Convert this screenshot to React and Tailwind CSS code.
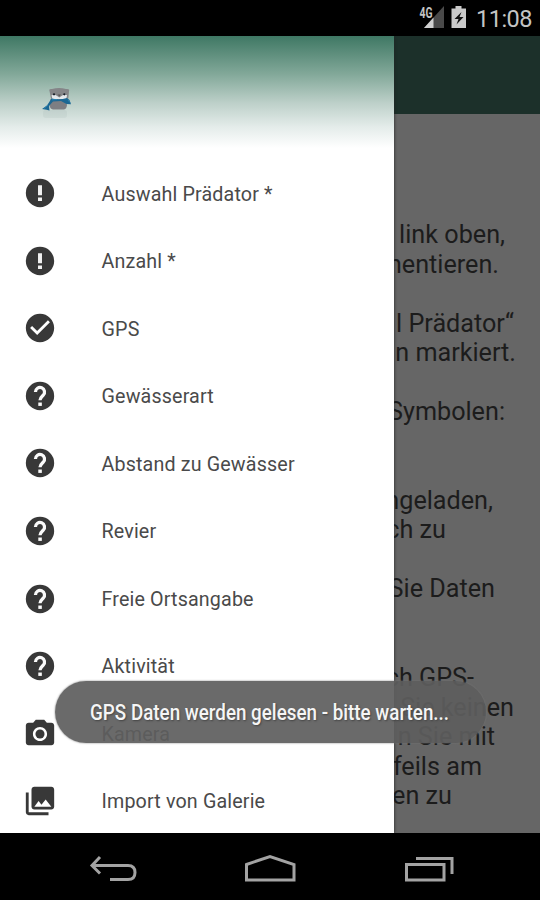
import { MdCheckCircle, MdPhotoCamera, MdPhotoLibrary } from 'react-icons/md';

const AlertIcon = ({ className }) => (
  <svg viewBox="0 0 24 24" className={className}>
    <circle cx="12" cy="12" r="10" fill="currentColor" />
    <path d="M10.600 6.500h2.800v7h-2.800zM10.600 15.100h2.800v2.600h-2.800z" fill="#f2f2f2" />
  </svg>
);

const HelpIcon = ({ className }) => (
  <svg viewBox="0 0 24 24" className={className}>
    <circle cx="12" cy="12" r="10" fill="currentColor" />
    <path d="M8.800 9.200a3.200 3.200 0 1 1 5.500 2.200C13.200 12.500 12 13.200 12 15" fill="none" stroke="#fafafa" strokeWidth="2.300" />
    <path d="M10.800 16.600h2.500V19h-2.500z" fill="#fafafa" />
  </svg>
);

const menuItems = [
  { label: 'Auswahl Prädator *', icon: AlertIcon },
  { label: 'Anzahl *', icon: AlertIcon },
  { label: 'GPS', icon: MdCheckCircle },
  { label: 'Gewässerart', icon: HelpIcon },
  { label: 'Abstand zu Gewässer', icon: HelpIcon },
  { label: 'Revier', icon: HelpIcon },
  { label: 'Freie Ortsangabe', icon: HelpIcon },
  { label: 'Aktivität', icon: HelpIcon },
  { label: 'Kamera', icon: MdPhotoCamera },
  { label: 'Import von Galerie', icon: MdPhotoLibrary },
];

// Only the line ends are visible beside the open drawer
const lines = [
  { text: 'link oben,', end: 'pr-[35px]' },
  { text: 'mentieren.', end: 'pr-[41px]' },
  { text: '' },
  { text: 'l Prädator“', end: 'pr-[26px]' },
  { text: 'n markiert.', end: 'pr-[24px]' },
  { text: '' },
  { text: 'Symbolen:', end: 'pr-[35px]' },
  { text: '' },
  { text: '' },
  { text: 'ngeladen,', end: 'pr-[47px]' },
  { text: 'ch zu', end: 'pr-[94px]' },
  { text: '' },
  { text: 'Sie Daten', end: 'pr-[45px]' },
  { text: '' },
  { text: '' },
  { text: 'ch GPS-', end: 'pr-[66px]' },
  { text: 'Sie keinen', end: 'pr-[26px]' },
  { text: 'n Sie mit', end: 'pr-[45px]' },
  { text: 'feils am', end: 'pr-[58px]' },
  { text: 'en zu', end: 'pr-[88px]' },
];

const StatusBar = () => (
  <div className="h-9 shrink-0 bg-black flex items-center justify-end pr-2 text-[#c4c4c4]">
    <svg width="26" height="24" viewBox="0 0 26 24" className="mr-[6px]">
      <path d="M25 0v22H5z" fill="#4a4a4a" />
      <path d="M14.500 11.500V22H5z" fill="#d0d0d0" />
      <text x="0.500" y="11.500" fontSize="14" fontWeight="700" fill="#c4c4c4" stroke="#000" strokeWidth="2" paintOrder="stroke" textLength="13" lengthAdjust="spacingAndGlyphs">4G</text>
    </svg>
    <svg width="16" height="24" viewBox="0 0 16 24" className="mr-[9px]">
      <path d="M4.500 0h6v2.500H15V22H.5V2.500h4z" fill="#cacaca" />
      <path d="M10.500 6L3.500 13h4l-2 5.500 7-7.500h-4z" fill="#111" />
    </svg>
    <span className="text-[23.500px] leading-9 tracking-[-0.500px] translate-y-px">11:08</span>
  </div>
);

const Otter = () => (
  <svg width="34" height="36" viewBox="0 0 34 36">
    <rect x="2" y="24" width="24" height="8" rx="3" fill="#7f9790" opacity="0.1" />
    <path d="M9.500 13h15l1.500 6q-.5 4-3 4.500H12q-3-.5-3.500-4z" fill="#7d7e83" />
    <path d="M8.500 5Q7.500 2.500 11 3q7-2.200 14 0 4-.5 3 2.200l-.7 7.300q-8.500 3-17.300 0z" fill="#858588" />
    <path d="M10.500 9.200q3-1 6 1l1.800 1.300 1.800-1.300q3-2 6-1l-1 4H11.500z" fill="#e4e8ec" />
    <circle cx="13" cy="8.300" r="1.100" fill="#171d26" />
    <circle cx="23.300" cy="8.300" r="1.100" fill="#171d26" />
    <path d="M16.500 8.500h3.500l-1.700 2z" fill="#5b5456" />
    <path d="M10.500 12.500q8 1.700 15.500-.5l2.500 2 1.500 4.200-4.500-.2-5.500-3-8 .5-4 4.500.5 4.500-3-.8-4.500-.7 5-3.500z" fill="#1c6793" />
    <path d="M11 13.800l5-.3M7 19l-4 3.500M27 14l2 2.500" stroke="#2b83b0" strokeWidth="1" />
  </svg>
);

const Drawer = () => (
  <aside className="w-[394px] shrink-0 bg-white overflow-hidden shadow-[0_0_3px_#222] z-10">
    <div className="h-[123.500px] pt-[50px] pl-[41px] bg-[linear-gradient(to_bottom,#3f7864_0px,#82a899_38px,#bdd0c9_67px,#e4ecea_91px,#ffffff_112px)]">
      <Otter />
    </div>
    <ul>
      {menuItems.map(({ label, icon: Icon }) => (
        <li key={label} className="h-[67.550px] flex items-center pl-[22.500px]">
          <Icon className="size-[34px] text-[#383838]" />
          <span className="ml-[45px] pt-[2px] text-[19.700px] tracking-[0.150px] text-[#4a4a4a] whitespace-nowrap">{label}</span>
        </li>
      ))}
    </ul>
  </aside>
);

const Content = () => (
  <main className="flex-1 min-w-0 bg-[#666666] overflow-hidden">
    <div className="h-[78px] bg-[#1c302a]" />
    <div className="pt-[106px]">
      {lines.map((line, i) => (
        <p
          key={i}
          className={`h-[29.540px] leading-[29.540px] flex justify-end whitespace-nowrap text-[25.200px] text-[#1c1c1c] ${line.end || ''}`}
        >
          {line.text}
        </p>
      ))}
    </div>
  </main>
);

const NavBar = () => (
  <nav className="h-[67px] shrink-0 bg-black">
    <svg width="540" height="67" viewBox="0 0 540 67" fill="none" stroke="#a3a3a3" strokeWidth="3">
      <path d="M100 24l-8 8.500 8 8M92 32.500h36q7 0 7 7t-7 7h-18" />
      <path d="M246.500 31.500L270 23.500l24 8v15.500h-47.500z" />
      <path d="M406.500 31.500h37.500v15.500h-37.500zM416 25.500h36V41" />
    </svg>
  </nav>
);

const App = () => {
  return (
    <div className="relative w-[540px] h-[900px] flex flex-col overflow-hidden bg-black font-[Roboto,sans-serif]">
      <StatusBar />
      <div className="h-[797px] flex shrink-0 overflow-hidden">
        <Drawer />
        <Content />
      </div>
      <NavBar />

      {/* Toast */}
      <div className="absolute z-20 left-[55px] top-[681px] w-[431px] h-[62px] rounded-full bg-[#5d5d5d]/92 shadow-[0_0_2px_#777] flex items-center pl-[34.500px]">
        <span className="pt-[2px] text-[22.500px] font-medium text-[#f5f5f5] whitespace-nowrap origin-left scale-x-[0.836] [text-shadow:1px_1px_2px_#444]">
          GPS Daten werden gelesen - bitte warten...
        </span>
      </div>
    </div>
  );
};

export default App;
